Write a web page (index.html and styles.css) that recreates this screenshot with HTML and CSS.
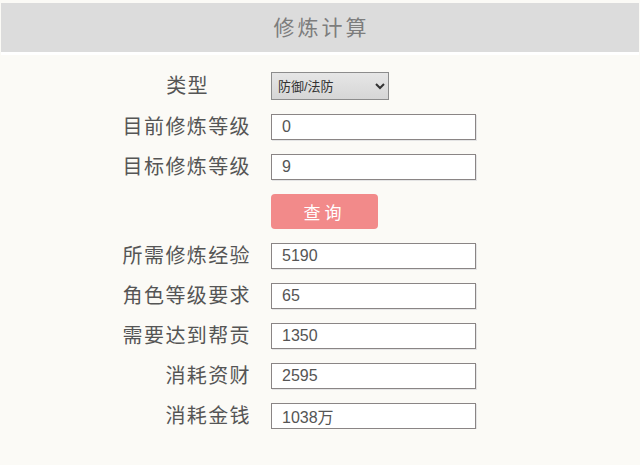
FILE: index.html
```html
<!DOCTYPE html>
<html lang="zh-CN">
<head>
    <meta charset="UTF-8">
    <meta name="viewport" content="width=device-width, initial-scale=1.0">
    <title>修炼计算</title>
    <link rel="stylesheet" href="styles.css">
</head>
<body>

    <header class="topbar">
        <h1>修炼计算</h1>
    </header>

    <form class="calc" id="formulario">
        <label class="calc-label calc-label-short" for="tipo">类型</label>
        <div class="calc-field">
            <select id="tipo" name="tipo">
                <option>防御/法防</option>
                <option>攻击/法术</option>
            </select>
        </div>

        <label class="calc-label" for="atual">目前修炼等级</label>
        <div class="calc-field"><input type="text" id="atual" value="0"></div>

        <label class="calc-label" for="alvo">目标修炼等级</label>
        <div class="calc-field"><input type="text" id="alvo" value="9"></div>

        <span></span>
        <div class="calc-field"><button type="button" class="query-btn">查询</button></div>

        <label class="calc-label" for="exp">所需修炼经验</label>
        <div class="calc-field"><input type="text" id="exp" value="5190"></div>

        <label class="calc-label" for="nivel">角色等级要求</label>
        <div class="calc-field"><input type="text" id="nivel" value="65"></div>

        <label class="calc-label" for="gong">需要达到帮贡</label>
        <div class="calc-field"><input type="text" id="gong" value="1350"></div>

        <label class="calc-label" for="zi">消耗资财</label>
        <div class="calc-field"><input type="text" id="zi" value="2595"></div>

        <label class="calc-label" for="jin">消耗金钱</label>
        <div class="calc-field"><input type="text" id="jin" value="1038万"></div>
    </form>

</body>
</html>
```

FILE: styles.css
```css
body {
    font-family: "Liberation Sans", Arial, "Noto Sans CJK SC", sans-serif;
    background-color: #fbfaf6;
    margin: 0;
    padding: 0;
}

.topbar {
    margin: 3px 1px 0;
    height: 49px;
    background-color: #dcdcdc;
    border-bottom: 3px solid #ffffff;
    text-align: center;
}

.topbar h1 {
    margin: 0;
    font-size: 21px;
    font-weight: normal;
    line-height: 50px;
    letter-spacing: 3px;
    padding-left: 3px;
    color: #7d7d7d;
}

.calc {
    display: grid;
    grid-template-columns: 250px 1fr;
    column-gap: 21px;
    row-gap: 14px;
    margin-top: 17px;
    align-items: center;
}

.calc-label {
    text-align: right;
    font-size: 20px;
    line-height: 26px;
    letter-spacing: 1.4px;
    color: #555555;
    margin-right: -1px;
}

.calc-label-short {
    padding-right: 42px;
}

.calc-field {
    display: flex;
}

select {
    width: 118px;
    height: 28px;
    font-family: "Liberation Sans", Arial, "Noto Sans CJK SC", sans-serif;
    font-size: 13px;
    color: #333333;
    background: linear-gradient(#e6e6e6, #d6d6d6);
    border: 1px solid #8c8c8c;
    padding: 0 2px;
}

input[type="text"] {
    box-sizing: border-box;
    width: 205px;
    height: 26px;
    padding: 0 10px;
    font-family: "Liberation Sans", Arial, "Noto Sans CJK SC", sans-serif;
    font-size: 16px;
    color: #555555;
    background-color: #ffffff;
    border: 1px solid #8a8585;
    box-shadow: 1px 1px 0 #e4e4e4;
}

.query-btn {
    width: 107px;
    height: 35px;
    background-color: #f28a8a;
    color: #ffffff;
    border: none;
    border-radius: 4px;
    font-family: "Liberation Sans", Arial, "Noto Sans CJK SC", sans-serif;
    font-size: 17px;
    letter-spacing: 4px;
    padding-left: 6px;
    cursor: pointer;
}
```
